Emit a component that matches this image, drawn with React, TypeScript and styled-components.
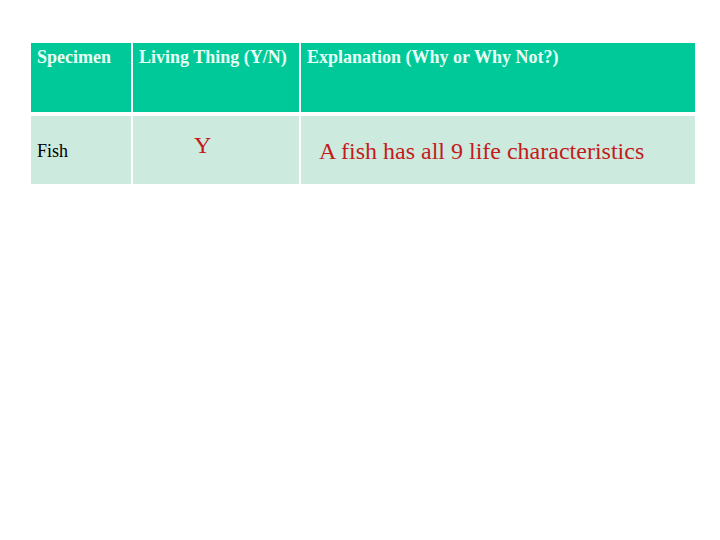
import React from "react";
import styled, { createGlobalStyle } from "styled-components";

const Global = createGlobalStyle`
  html, body { margin: 0; padding: 0; background: #ffffff; }
  body { width: 720px; height: 540px; overflow: hidden; }
`;

const Page = styled.div`
  width: 720px;
  height: 540px;
  padding: 43px 0 0 31px;
  box-sizing: border-box;
  font-family: "Liberation Serif", "Times New Roman", serif;
`;

const Table = styled.div`
  display: grid;
  grid-template-columns: 100px 166px 394px;
  grid-template-rows: 69px 68px;
  column-gap: 2px;
  row-gap: 4px;
`;

const HeadCell = styled.div`
  background: #00c999;
  color: #e8fff6;
  font-weight: bold;
  font-size: 18px;
  line-height: 20px;
  padding: 4px 0 0 6px;
  white-space: nowrap;
`;

type BodyProps = { $top: number; $left: number; $size: number; $red?: boolean };

const BodyCell = styled.div<BodyProps>`
  background: #cdeadf;
  color: ${(p) => (p.$red ? "#c41a1a" : "#000000")};
  font-size: ${(p) => p.$size}px;
  line-height: ${(p) => (p.$size === 18 ? 20 : 28)}px;
  padding: ${(p) => p.$top}px 0 0 ${(p) => p.$left}px;
  white-space: nowrap;
`;

export default function App() {
  return (
    <>
      <Global />
      <Page>
        <Table>
          <HeadCell>Specimen</HeadCell>
          <HeadCell>Living Thing (Y/N)</HeadCell>
          <HeadCell>Explanation (Why or Why Not?)</HeadCell>
          <BodyCell $top={25} $left={6} $size={18}>Fish</BodyCell>
          <BodyCell $top={15} $left={61} $size={24} $red>Y</BodyCell>
          <BodyCell $top={21} $left={18} $size={24} $red>A fish has all 9 life characteristics</BodyCell>
        </Table>
      </Page>
    </>
  );
}
